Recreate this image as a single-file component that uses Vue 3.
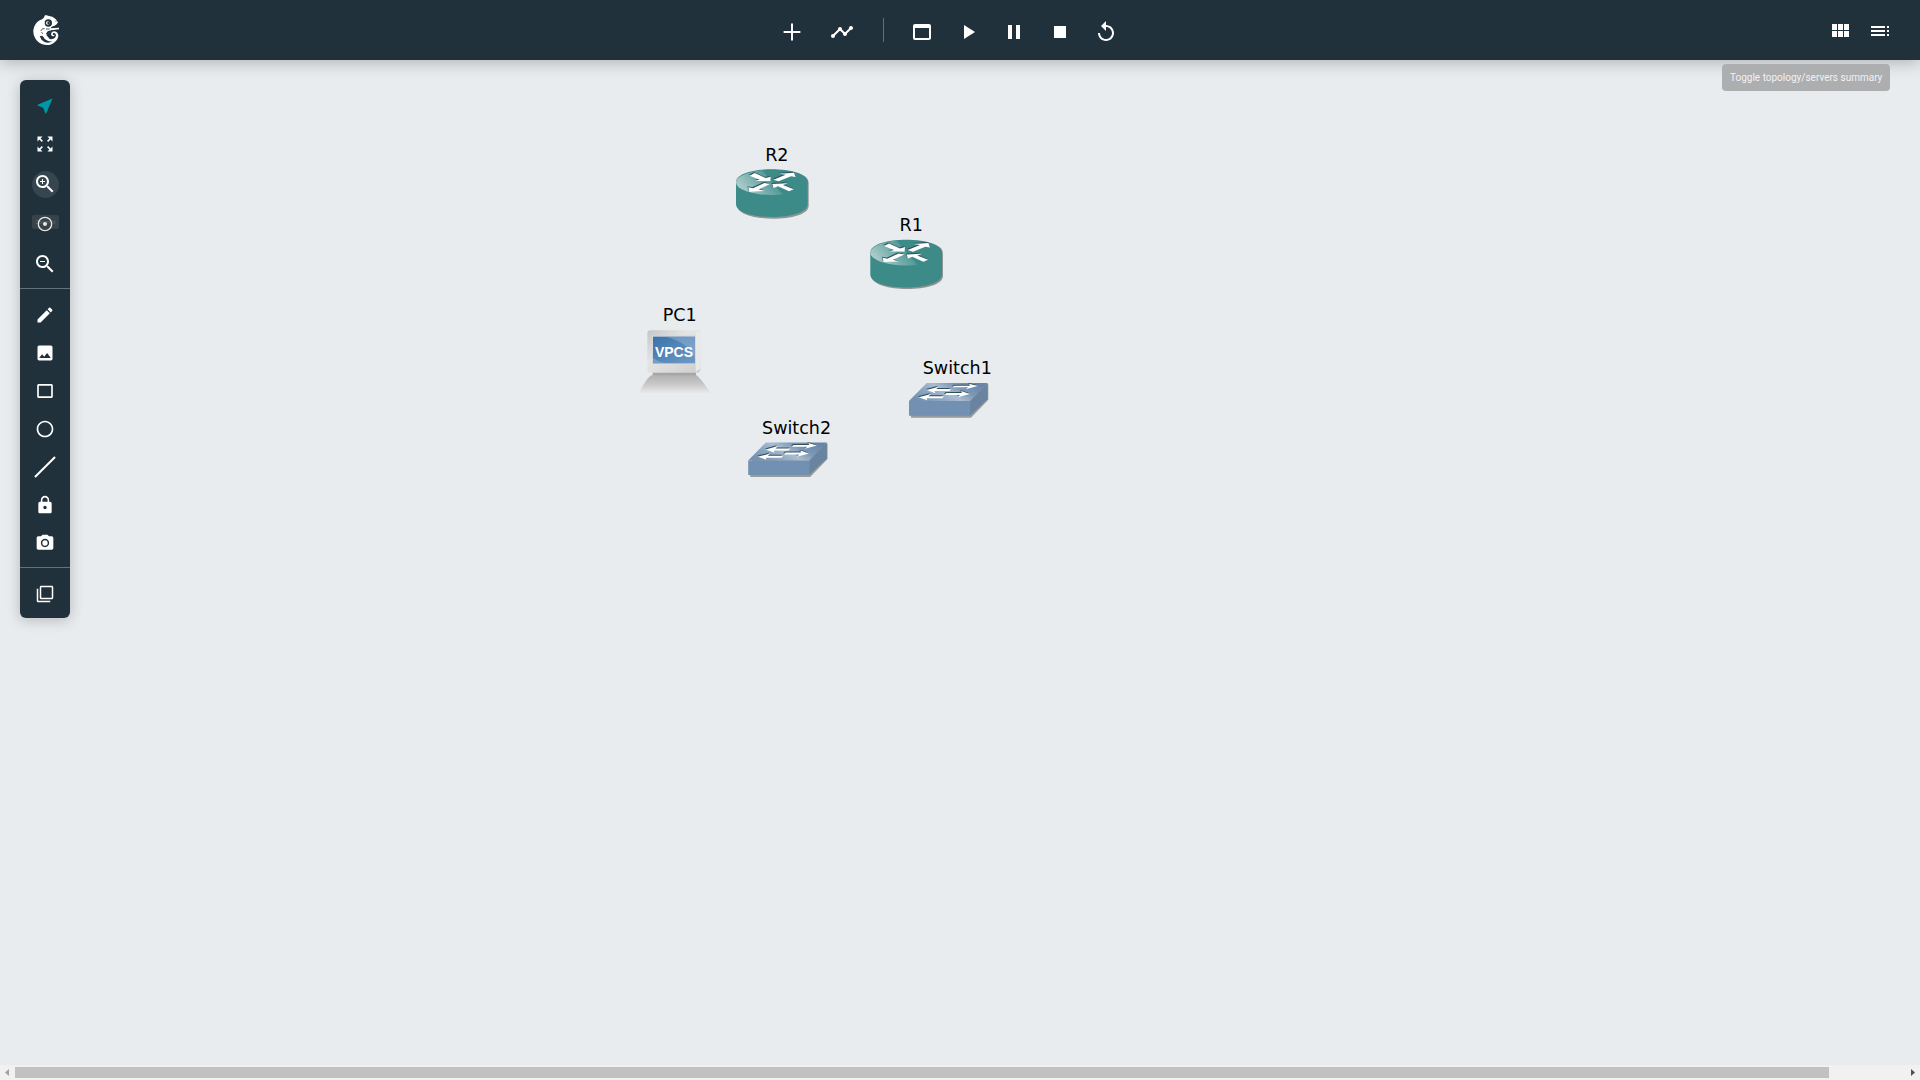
<script setup>
const lifecycle = [
  { id: 'console', d: 'M19 4H5c-1.11 0-2 .9-2 2v12c0 1.1.89 2 2 2h14c1.1 0 2-.9 2-2V6c0-1.1-.89-2-2-2zm0 14H5V8h14v10z' },
  { id: 'start', d: 'M8 5v14l11-7z' },
  { id: 'pause', d: 'M6 19h4V5H6v14zm8-14v14h4V5h-4z' },
  { id: 'stop', d: 'M6 6h12v12H6z' },
  { id: 'reload', d: 'M12 5V1L7 6l5 5V7c3.31 0 6 2.69 6 6s-2.69 6-6 6-6-2.69-6-6H4c0 4.42 3.58 8 8 8s8-3.58 8-8-3.58-8-8-8z' },
]

const drawTools = [
  { id: 'note', d: 'M3 17.25V21h3.75L17.81 9.94l-3.75-3.75L3 17.25zM20.71 7.04c.39-.39.39-1.02 0-1.41l-2.34-2.34c-.39-.39-1.02-.39-1.41 0l-1.83 1.83 3.75 3.75 1.83-1.83z' },
  { id: 'image', d: 'M21 19V5c0-1.1-.9-2-2-2H5c-1.1 0-2 .9-2 2v14c0 1.1.9 2 2 2h14c1.1 0 2-.9 2-2zM8.5 13.5l2.5 3.01L14.5 12l4.5 6H5l3.5-4.5z' },
  { id: 'rectangle', d: 'M19.6 3.7H4.4c-1 0-1.8.8-1.8 1.8v13c0 1 .8 1.8 1.8 1.8h15.2c1 0 1.8-.8 1.8-1.8v-13c0-1-.8-1.8-1.8-1.8zm-.2 14.6H4.6V5.7h14.8v12.6z' },
  { id: 'ellipse', d: 'M12 2C6.47 2 2 6.47 2 12s4.47 10 10 10 10-4.47 10-10S17.53 2 12 2zm0 18c-4.41 0-8-3.59-8-8s3.59-8 8-8 8 3.59 8 8-3.59 8-8 8z' },
  { id: 'line', d: 'M-.9 23.2 23.2-.9 24.9.8.8 24.9z' },
  { id: 'lock', d: 'M18 8h-1V6c0-2.76-2.24-5-5-5S7 3.24 7 6v2H6c-1.1 0-2 .9-2 2v10c0 1.1.9 2 2 2h12c1.1 0 2-.9 2-2V10c0-1.1-.9-2-2-2zm-6 9c-1.1 0-2-.9-2-2s.9-2 2-2 2 .9 2 2-.9 2-2 2zm3.1-9H8.9V6c0-1.71 1.39-3.1 3.1-3.1 1.71 0 3.1 1.39 3.1 3.1v2z' },
  { id: 'screenshot', d: 'M12 8.8a3.2 3.2 0 1 0 0 6.4 3.2 3.2 0 0 0 0-6.4zM9 2 7.17 4H4c-1.1 0-2 .9-2 2v12c0 1.1.9 2 2 2h16c1.1 0 2-.9 2-2V6c0-1.1-.9-2-2-2h-3.17L15 2H9zm3 15c-2.76 0-5-2.24-5-5s2.24-5 5-5 5 2.24 5 5-2.24 5-5 5z' },
]

const routers = [
  { name: 'R2', x: 720, y: 140, lx: 765.2, ly: 160.7 },
  { name: 'R1', x: 854.3, y: 210.4, lx: 899.6, ly: 230.8 },
]
const switches = [
  { name: 'Switch1', x: 900, y: 350, lx: 922.7, ly: 373.7 },
  { name: 'Switch2', x: 739.2, y: 409.4, lx: 762, ly: 433.5 },
]
</script>

<template>
  <div class="page">
    <header class="topbar">
      <svg class="logo" viewBox="96 42 84 96">
        <path fill="#fff" d="M137 45 Q147 49 157 50 Q168 55 174 67 L170 73 Q165 79 155 80 L152 85 L177 83 V88 L153 91 Q147 101 139 105 L146 113 Q149 119 157 117 Q167 115 168 106 Q167 98 160 99 Q156 102 160 105 L163 104 V108 Q154 111 153 103 Q154 94 163 94 Q175 96 175 109 Q171 128 151 134 Q128 139 111 122 Q99 108 100 91 Q103 70 119 61 Q132 56 134 47Z" />
        <circle cx="145" cy="69" r="11" fill="#20313b" />
        <circle cx="143.5" cy="69" r="5.5" fill="#fff" />
        <circle cx="145.5" cy="69" r="3.6" fill="#20313b" />
        <path class="mark" d="M122 93 L128 86 H134 M138 87 H149 M124 97 L129 101" />
        <path fill="#20313b" d="M119 109 L126 107 Q131 110 134 117 L143 122 Q150 126 158 123 Q147 131 134 126 Q123 121 119 109Z" />
        <path fill="#20313b" d="M143 94 L153 91 Q149 100 141 104 L138 101Z" />
        <path fill="#20313b" d="M166 62 L170 62 L168 66Z" />
      </svg>
      <nav class="actions">
        <svg class="icon" viewBox="0 0 24 24"><path d="M20.4 13H13v7.6h-2V13H3.6v-2H11V3.6h2V11h7.4z" /></svg>
        <svg class="icon link" viewBox="0 0 24 24"><path d="M23 8c0 1.1-.9 2-2 2-.18 0-.35-.02-.51-.07l-3.56 3.55c.05.16.07.34.07.52 0 1.1-.9 2-2 2s-2-.9-2-2c0-.18.02-.36.07-.52l-2.55-2.55c-.16.05-.34.07-.52.07s-.36-.02-.52-.07l-4.55 4.56c.05.16.07.33.07.51 0 1.1-.9 2-2 2s-2-.9-2-2 .9-2 2-2c.18 0 .35.02.51.07l4.56-4.55C8.02 9.36 8 9.18 8 9c0-1.1.9-2 2-2s2 .9 2 2c0 .18-.02.36-.07.52l2.55 2.55c.16-.05.34-.07.52-.07s.36.02.52.07l3.55-3.56C19.02 8.35 19 8.18 19 8c0-1.1.9-2 2-2s2 .9 2 2z" /></svg>
        <span class="separator"></span>
        <svg v-for="a in lifecycle" :key="a.id" class="icon run" viewBox="0 0 24 24"><path :d="a.d" /></svg>
      </nav>
      <nav class="views">
        <svg class="icon" viewBox="0 0 24 24"><path d="M4 11h5V5H4v6zm0 7h5v-6H4v6zm6 0h5v-6h-5v6zm6 0h5v-6h-5v6zm-6-7h5V5h-5v6zm6-6v6h5V5h-5z" /></svg>
        <svg class="icon" viewBox="0 0 24 24"><path d="M3 9h14V7H3v2zm0 4h14v-2H3v2zm0 4h14v-2H3v2zm16 0h2v-2h-2v2zm0-10v2h2V7h-2zm0 6h2v-2h-2v2z" /></svg>
      </nav>
      <div class="tooltip">Toggle topology/servers summary</div>
    </header>

    <main class="workspace">
      <aside class="toolbox">
        <div class="tool"><svg class="small teal" viewBox="0 0 24 24"><path d="M21 3L3 10.53v.98l6.84 2.65L12.48 21h.98L21 3z" /></svg></div>
        <div class="tool"><svg class="fit" viewBox="0 0 24 24"><path d="M15 3l2.3 2.3-2.89 2.87 1.42 1.42L18.7 6.7 21 9V3zM3 9l2.3-2.3 2.87 2.89 1.42-1.42L6.7 5.3 9 3H3zm6 12l-2.3-2.3 2.89-2.87-1.42-1.42L5.3 17.3 3 15v6zm12-6l-2.3 2.3-2.87-2.89-1.42 1.42 2.89 2.87L15 21h6z" /></svg></div>
        <div class="zoom-tools">
          <div class="tool"><span class="halo"><svg class="icon" viewBox="0 0 24 24"><path d="M15.5 14h-.79l-.28-.27C15.41 12.59 16 11.11 16 9.5 16 5.91 13.09 3 9.5 3S3 5.91 3 9.5 5.91 16 9.5 16c1.61 0 3.09-.59 4.23-1.57l.27.28v.79l5 4.99L20.49 19l-4.99-5zm-6 0C7.01 14 5 11.99 5 9.5S7.01 5 9.5 5 14 7.01 14 9.5 11.99 14 9.5 14zm2.5-4h-2v2H9v-2H7V9h2V7h1v2h2v1z" /></svg></span></div>
          <div class="tool">
            <span class="hint">Zoom in</span>
            <svg class="reset" viewBox="0 0 24 24"><circle cx="12" cy="12" r="10" fill="none" stroke="#fff" stroke-width="2" /><circle cx="12" cy="12" r="3" /></svg>
          </div>
          <div class="tool"><svg class="icon" viewBox="0 0 24 24"><path d="M15.5 14h-.79l-.28-.27C15.41 12.59 16 11.11 16 9.5 16 5.91 13.09 3 9.5 3S3 5.91 3 9.5 5.91 16 9.5 16c1.61 0 3.09-.59 4.23-1.57l.27.28v.79l5 4.99L20.49 19l-4.99-5zm-6 0C7.01 14 5 11.99 5 9.5S7.01 5 9.5 5 14 7.01 14 9.5 11.99 14 9.5 14zM7 9h5v1H7z" /></svg></div>
        </div>
        <div class="draw-tools">
          <div v-for="t in drawTools" :key="t.id" class="tool"><svg class="small" viewBox="0 0 24 24"><path :d="t.d" /></svg></div>
        </div>
        <div class="tool layers"><svg class="stack" viewBox="0 0 24 24"><path d="M3 5H1v16c0 1.1.9 2 2 2h16v-2H3V5zm18-4H7c-1.1 0-2 .9-2 2v14c0 1.1.9 2 2 2h14c1.1 0 2-.9 2-2V3c0-1.1-.9-2-2-2zm0 16H7V3h14v14z" /></svg></div>
      </aside>
    </main>

    <svg class="topology" width="1920" height="1065" viewBox="0 0 1920 1065">
      <defs>
        <linearGradient id="routerTop" x1="0" y1=".65" x2="1" y2=".35">
          <stop offset="0" stop-color="#b2d0cf" /><stop offset=".5" stop-color="#559b99" /><stop offset=".52" stop-color="#3d8b89" /><stop offset="1" stop-color="#3d8b89" />
        </linearGradient>
        <linearGradient id="switchTop" x1="0" y1=".7" x2="1" y2=".3">
          <stop offset="0" stop-color="#7390b1" /><stop offset=".28" stop-color="#8ea7c2" /><stop offset=".48" stop-color="#aabdd1" /><stop offset=".7" stop-color="#7d98b7" /><stop offset="1" stop-color="#6885a8" />
        </linearGradient>
        <linearGradient id="case" x1="0" y1="0" x2="1" y2="1">
          <stop offset="0" stop-color="#c6c6c6" /><stop offset=".4" stop-color="#e4e4e4" /><stop offset="1" stop-color="#cecece" />
        </linearGradient>
        <linearGradient id="base" x1="0" y1="0" x2="0" y2="1">
          <stop offset="0" stop-color="#b2b2b2" /><stop offset=".5" stop-color="#c9c9c9" /><stop offset="1" stop-color="#ececec" />
        </linearGradient>
        <linearGradient id="screen" x1="0" y1="0" x2="1" y2="1">
          <stop offset="0" stop-color="#3a73aa" /><stop offset="1" stop-color="#6f9ac7" />
        </linearGradient>
        <g id="router">
          <path fill="#8f9393" d="M52 132 Q52 93 158 93 C250 93 266 110 266 132 V197 C266 249 52 249 52 197Z" />
          <path fill="#3d8b89" d="M48 127 C48 75 263 75 263 127 V192 C263 244 48 244 48 192Z" />
          <ellipse cx="155.5" cy="127" rx="107.5" ry="38" fill="url(#routerTop)" />
          <g id="routerArrows">
            <path d="M89 107 L104 99 L137 114 L152 110 L151 123 L105 123 L119 119Z" />
            <path d="M160 119 L197 104 L178 101 L222 98 L227 111 L213 109 L176 124Z" />
            <path d="M150 132 L116 148 L133 153 L88 155 L85 142 L99 145 L133 129Z" />
            <path d="M221 148 L207 154 L174 139 L161 144 L157 132 L203 130 L189 135Z" />
          </g>
        </g>
        <g id="switch">
          <path fill="#999b9d" d="M33 159 L86 103 H265 V149 L213 203 H33Z" />
          <path fill="#7190b2" d="M27 153 H210 V197 H27Z" />
          <path fill="#69849f" d="M210 153 L263 99 V147 L210 197Z" />
          <path fill="url(#switchTop)" d="M27 153 L80 99 H263 L210 153Z" />
          <g id="switchArrows">
            <path d="M80 120 L116 110 L109 117 H153 L148 123 H104 L106 130Z" />
            <path d="M163 107 H210 L207 101 L233 108 L197 118 L204 112 H158Z" />
            <path d="M56 142 L93 132 L86 139 H132 L127 145 H80 L82 151Z" />
            <path d="M139 129 H185 L184 123 L209 132 L173 142 L180 135 H134Z" />
          </g>
        </g>
      </defs>
      <g v-for="n in routers" :key="n.name">
        <use href="#router" :transform="`translate(${n.x} ${n.y}) scale(.33333)`" />
        <text class="label" :x="n.lx" :y="n.ly">{{ n.name }}</text>
      </g>
      <g transform="translate(630 300) scale(.33333)">
        <path fill="#a6a6a6" d="M68 214 H198 V228 H68Z" />
        <rect x="52" y="91" width="159" height="127" rx="9" fill="url(#case)" />
        <path fill="#e9e9e9" d="M197 94 H202 Q211 94 211 103 V205 L197 216Z" />
        <rect x="66" y="107" width="131" height="85" fill="#d6d6d6" />
        <rect x="69" y="110" width="126" height="80" fill="url(#screen)" />
        <path fill="#a5c0dd" opacity=".4" d="M110 110 H195 V175 Q180 132 110 110 M69 173 Q84 187 120 190 H69Z" />
        <path fill="url(#base)" d="M64 226 H200 Q211 234 240 276 Q242 281 235 281 H34 Q26 281 29 276 Q48 236 64 226Z" />
      </g>
      <text class="vpcs" x="654.9" y="357">VPCS</text>
      <text class="label" x="662.8" y="320.7">PC1</text>
      <g v-for="n in switches" :key="n.name">
        <use href="#switch" :transform="`translate(${n.x} ${n.y}) scale(.33333)`" />
        <text class="label" :x="n.lx" :y="n.ly">{{ n.name }}</text>
      </g>
    </svg>

    <footer class="scrollbar">
      <svg class="arrow" width="15" height="15"><path fill="#a3a3a3" d="M9 4v7L5 7.5z" /></svg>
      <div class="track"><div class="thumb"></div></div>
      <svg class="arrow" width="15" height="15"><path fill="#505050" d="M6 4v7l4-3.5z" /></svg>
    </footer>
  </div>
</template>

<style>
body { margin: 0; overflow: hidden; background: #e8ecef; }
</style>

<style scoped>
.page { position: relative; display: flex; flex-direction: column; height: 1080px; overflow: hidden; background: #e8ecef; font-family: Roboto, sans-serif; }
svg { display: block; fill: #fff; flex: none; }
.topbar, .toolbox { background: #20313b; }
.topbar { position: relative; z-index: 2; display: grid; grid-template-columns: 748px 1fr auto; height: 60px; align-items: start; padding: 0 28px 0 32px; flex: none; box-shadow: 0 2px 16px rgba(0, 0, 0, .26); }
.logo { width: 28px; height: 32px; margin-top: 14px; }
.icon { width: 24px; height: 24px; }
.actions { display: flex; align-items: center; padding-top: 20px; }
.link { margin-left: 26px; }
.separator { width: 1px; height: 24px; margin: -4px 4px 0 29px; background: #627078; }
.run { margin-left: 22px; }
.views { display: flex; gap: 16px; padding-top: 19px; }
.tooltip { position: absolute; left: 1722px; top: 64px; width: 168px; height: 27px; box-sizing: border-box; padding-left: 8px; border-radius: 4px; background: #adaeb0; color: #f1f2f3; font-size: 10px; line-height: 27px; letter-spacing: 0; white-space: nowrap; }
.workspace { flex: 1; padding: 20px; }
.toolbox { width: 50px; height: 531px; padding-top: 7px; border-radius: 6px; box-shadow: 0 2px 14px rgba(0, 0, 0, .22); }
.tool { position: relative; display: flex; align-items: center; justify-content: center; height: 38px; }
.small { width: 20px; height: 20px; overflow: visible; }
.fit { width: 20px; height: 20px; }
.teal { fill: #0097a7; }
.zoom-tools { padding: 1px 0 4px; border-bottom: 1px solid #62717a; }
.zoom-tools .tool { height: 40px; }
.halo { display: flex; align-items: center; width: 27px; height: 27px; margin-left: 1px; border-radius: 50%; background: #36454e; }
.halo .icon { margin-left: 1px; }
.reset { position: relative; width: 16px; height: 16px; opacity: .88; }
.hint { position: absolute; left: 12px; top: 11px; width: 27px; height: 14px; border-radius: 2px; background: rgba(97, 97, 97, .38); color: rgba(255, 255, 255, .2); font-size: 5.5px; line-height: 14px; text-align: center; white-space: nowrap; }
.draw-tools { padding: 7px 0 5px; border-bottom: 1px solid #62717a; }
.layers { margin-top: 7px; }
.stack { width: 18px; height: 18px; margin-right: 1px; }
.mark { fill: none; stroke: #20313b; stroke-width: 2.4; }
.topology { position: absolute; left: 0; top: 0; }
.label { fill: #000; font: 17.55px "DejaVu Sans", sans-serif; }
.vpcs { fill: #fff; font: bold 14px "Liberation Sans", sans-serif; }
#routerArrows, #switchArrows { fill: #fff; filter: drop-shadow(-2px -3px 0 #2f4f5b); }
.scrollbar { display: flex; height: 15px; background: #f1f1f1; flex: none; }
.track { flex: 1; padding: 2px 0; }
.thumb { width: 1814px; height: 11px; background: #c1c1c1; }
</style>
